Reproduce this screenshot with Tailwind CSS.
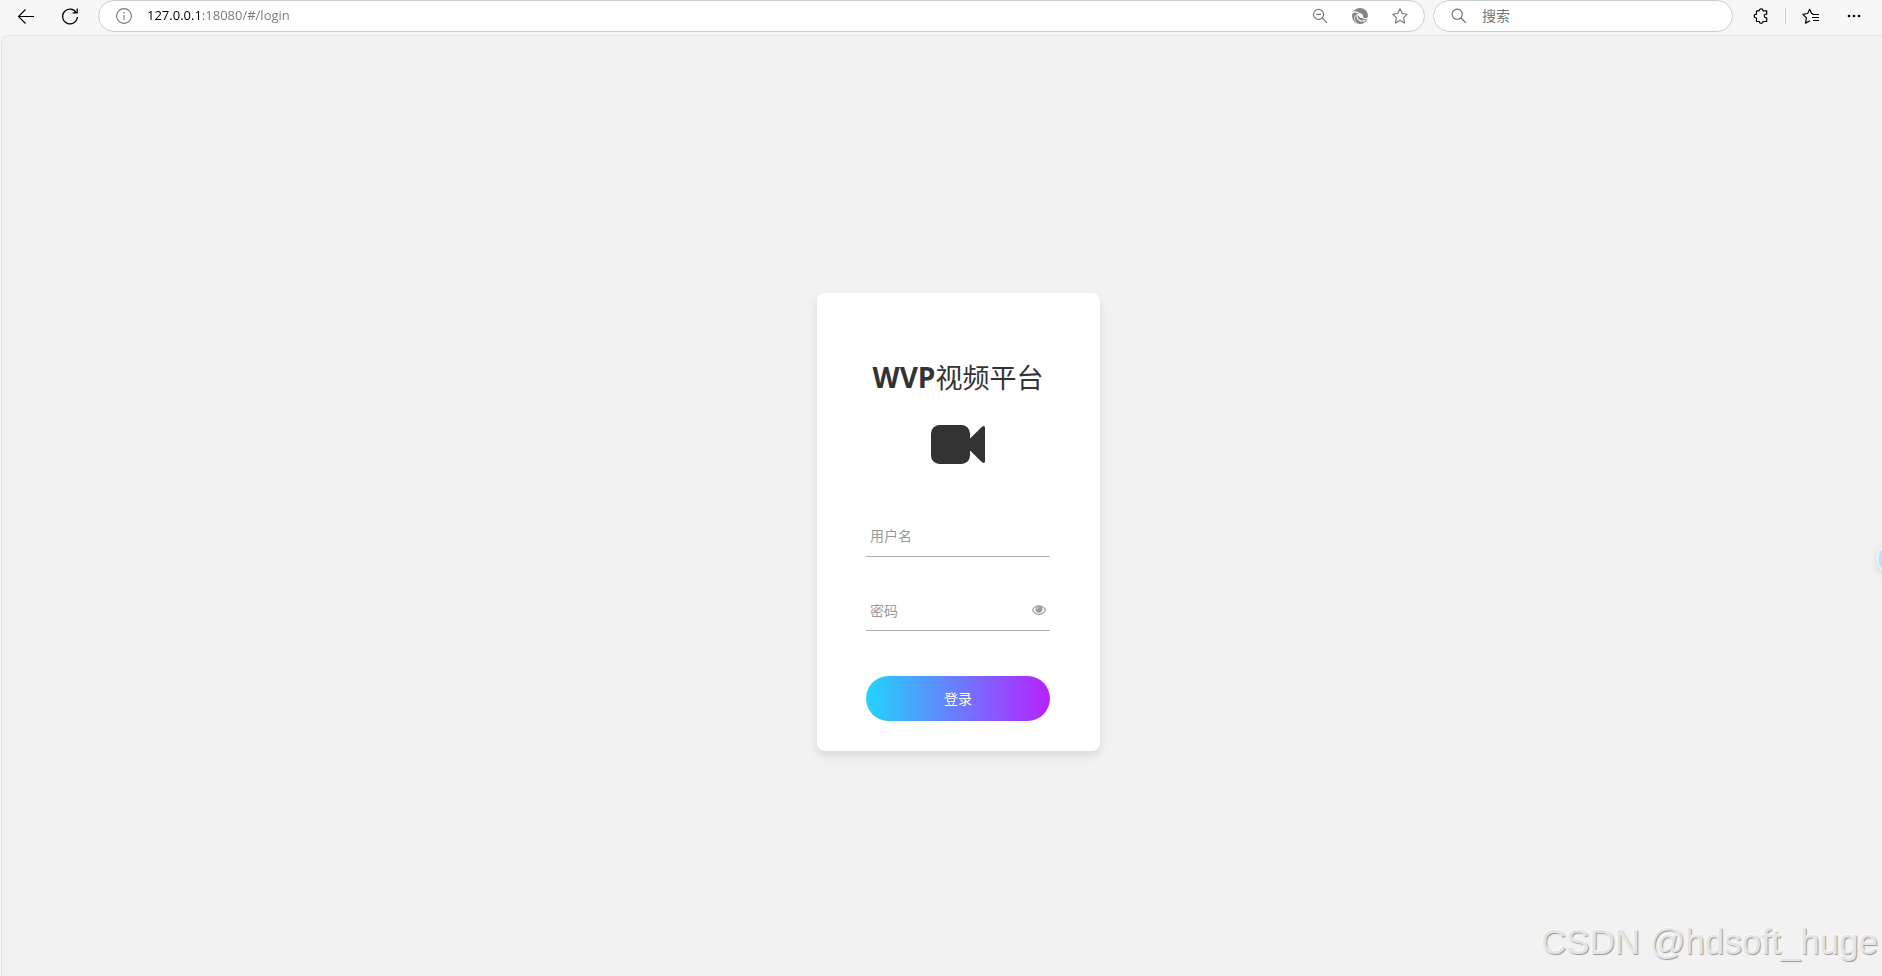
<!DOCTYPE html>
<html lang="zh-CN">
<head>
<meta charset="utf-8">
<title>WVP视频平台</title>
<script src="https://cdn.jsdelivr.net/npm/@tailwindcss/browser@4"></script>
</head>
<body class="flex h-screen flex-col overflow-hidden bg-[#f7f7f7] font-['Open_Sans','Noto_Sans_CJK_SC',sans-serif] text-[#333]">
  <header class="flex h-[35px] shrink-0 items-start pl-4 pr-[21px]">
    <button aria-label="后退" class="mt-1 flex size-6 items-center justify-center pr-1 text-black">
      <svg class="h-5 w-5 shrink-0" viewBox="0 0 20 20" fill="none" stroke="currentColor" stroke-width="1.1"><path d="M18 10.500H2.500M9.500 3.500l-7 7 7 7"/></svg>
    </button>
    <button aria-label="刷新" class="ml-[18px] mt-1 flex size-6 items-center justify-center text-black">
      <svg class="size-5" viewBox="0 0 20 20" fill="none" stroke="currentColor" stroke-width="1.2"><path d="M16.300 6.600A7.400 7.400 0 1 0 17.400 11M17.200 2.400v4.500h-4.600"/></svg>
    </button>
    <div class="ml-4 flex h-8 flex-1 items-center rounded-full border border-[#cfcfcf] bg-white pl-[17px] pr-4">
      <svg class="size-4 shrink-0 text-[#767676]" viewBox="0 0 16 16" fill="none" stroke="currentColor" stroke-width="1.1"><circle cx="8" cy="8" r="7.400"/><path d="M8 7v5"/><circle cx="8" cy="4.700" r=".5" fill="currentColor" stroke-width=".6"/></svg>
      <input aria-label="地址" type="text" value="127.0.0.1:18080/#/login" class="ml-[15px] min-w-0 flex-1 bg-linear-to-r from-black from-[52px] to-[#767676] to-[52px] bg-clip-text text-[13px] text-transparent outline-none">
      <div class="flex gap-6 text-[#767676]">
        <button aria-label="缩小"><svg class="size-4" viewBox="0 0 16 16" fill="none" stroke="currentColor" stroke-width="1.1"><circle cx="6.600" cy="6.400" r="5"/><path d="M4.200 6.400H9M10.300 10l4.700 4.800"/></svg></button>
        <button aria-label="浏览器"><svg class="size-4" viewBox="0 0 16 16"><circle cx="8" cy="8" r="8" fill="#858585"/><g fill="none" stroke="#fff" stroke-width="1.200" stroke-linecap="round"><path d="M0 5.200C2 3.600 5 3.700 7.400 5.600c2 .2 3.300 1.500 3 3.300"/><path d="M10.400 8.700c.2 2 2.500 2.300 5.600 1.300"/><path d="M5.400 6.500C4.200 9 5.500 12 8.500 12.800c1.500.4 3 .2 4.300-.4"/><path d="M3.800 7.200C1.600 9.500 2.300 13 4.800 15.200" stroke-width=".7"/></g><path d="M5.600 6.300l2.400-.9 2.500 2.300-.2 2.300-2.300-.2z" fill="#fff"/></svg></button>
        <button aria-label="收藏"><svg class="size-4" viewBox="0 0 16 16" fill="none" stroke="currentColor" stroke-width="1.1" stroke-linejoin="round"><path d="M8 .8l2.200 4.700 5.100.7-3.700 3.500.9 5.200L8 12.400l-4.500 2.500.9-5.200L.7 6.200l5.100-.7z"/></svg></button>
      </div>
    </div>
    <div class="ml-2 flex h-8 w-[300px] items-center rounded-full border border-[#cfcfcf] bg-white pl-[17px]">
      <svg class="size-4 shrink-0 text-[#666]" viewBox="0 0 16 16" fill="none" stroke="currentColor" stroke-width="1.1"><circle cx="6.200" cy="6.200" r="5.100"/><path d="M10 10l4.700 4.800"/></svg>
      <input aria-label="搜索" type="text" placeholder="搜索" class="ml-[15px] min-w-0 flex-1 text-sm outline-none placeholder:text-[#767676]">
    </div>
    <div class="flex h-8 items-center text-black">
      <button aria-label="扩展" class="ml-5"><svg class="size-4" viewBox="0 0 16 16" fill="none" stroke="currentColor" stroke-width="1.200" stroke-linejoin="round"><path d="M3.500 2.800h2.700C6.200.300 10 .300 10 2.800h3.700v3.400c-3.200-.4-3.200 4 0 3.600v3.700H10c0 2.500-3.800 2.500-3.800 0H3.500V10C.400 10 .400 6.200 3.500 6.200z"/></svg></button>
      <span class="ml-4 h-4 w-px bg-[#cfcfcf]"></span>
      <button aria-label="收藏夹" class="ml-4"><svg class="size-[17px]" viewBox="0 0 17 17" fill="none" stroke="currentColor" stroke-width="1.200" stroke-linejoin="round"><path d="M11.200 5.600l-1.600-.2L7.700 1.200 5.600 5.500.900 6.300l3.500 3.500-.8 5.300 4.400-2.400M10.500 6.500H17M10 9.500h7M11 12.500h6"/></svg></button>
      <button aria-label="更多" class="ml-7"><svg class="h-4 w-[14px]" viewBox="0 0 14 16" fill="currentColor"><circle cx="2" cy="8" r="1.300"/><circle cx="7" cy="8" r="1.300"/><circle cx="12" cy="8" r="1.300"/></svg></button>
    </div>
  </header>

  <main class="relative ml-px flex flex-1 items-center justify-center overflow-hidden rounded-tl-lg border-l border-t border-[#e4e4e4] bg-[#f2f2f2] pl-[33px] pt-8">
    <form class="flex w-[283px] flex-col rounded-lg bg-white pl-[49px] pr-[50px] pb-[30px] pt-[65px] shadow-[0_5px_10px_rgba(0,0,0,0.1)]">
      <h1 class="text-center text-[27px] leading-10 whitespace-nowrap"><span class="text-[28px] leading-none font-bold">WVP</span>视频平台</h1>
      <svg class="mx-auto mt-[27px] h-[39px] w-[54px]" viewBox="0 0 54 39" fill="#333"><rect width="39" height="39" rx="8.500"/><path d="M38 14.500L51 1.800q3-2 3 1v33.400q0 3-3 1L38 24.500z"/></svg>
      <input aria-label="用户名" type="text" placeholder="用户名" class="mt-[53px] h-10 w-full border-b border-[#adadad] pb-0.5 pl-1 text-sm outline-none placeholder:text-[#999]">
      <div class="mt-[34px] flex h-10 items-center border-b border-[#adadad] pl-1 pr-1">
        <input aria-label="密码" type="password" placeholder="密码" class="min-w-0 flex-1 text-sm outline-none placeholder:text-[#999]">
        <button type="button" aria-label="显示密码" class="pb-0.5"><svg class="block h-[10px] w-[14px]" viewBox="0 0 14 10" fill="none" stroke="#999" stroke-width="1.200"><path d="M.600 5C3.500-.700 10.500-.700 13.400 5 10.500 10.700 3.500 10.700.600 5z"/><circle cx="7" cy="4.300" r="3.400" fill="#999" stroke="none"/><path d="M5.200 4.200A1.800 1.800 0 0 1 7 2.400" stroke="#fff" stroke-width=".7"/></svg></button>
      </div>
      <button type="submit" class="mt-[45px] h-[45px] rounded-full bg-[linear-gradient(to_right,#21d4fd,#b721ff)] text-sm text-white">登录</button>
    </form>
    <button aria-label="助手" class="absolute -right-[27px] top-[507px] size-8 rounded-full border border-white bg-[#c2defc] shadow-[0_2px_8px_rgba(0,0,0,0.12)]"></button>
    <p class="absolute bottom-2.5 right-1 font-['Liberation_Sans',sans-serif] text-[35px] leading-12 text-[#e4e4e4] [text-shadow:-1px_-1px_0_#fafafa,1px_1px_1px_#999]">CSDN @hdsoft_huge</p>
  </main>
</body>
</html>
